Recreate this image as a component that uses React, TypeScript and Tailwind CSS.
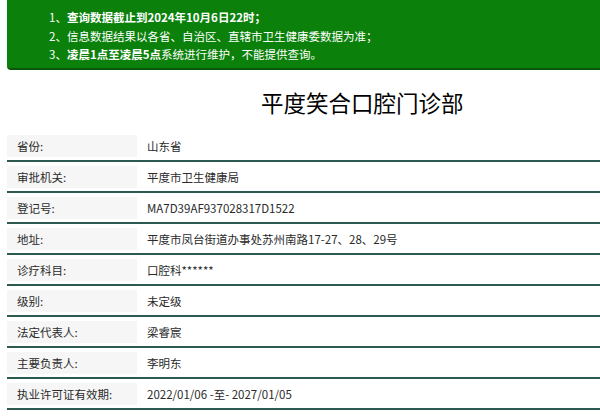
const rows: [string, string][] = [
  ["省份:", "山东省"],
  ["审批机关:", "平度市卫生健康局"],
  ["登记号:", "MA7D39AF937028317D1522"],
  ["地址:", "平度市凤台街道办事处苏州南路17-27、28、29号"],
  ["诊疗科目:", "口腔科******"],
  ["级别:", "未定级"],
  ["法定代表人:", "梁睿宸"],
  ["主要负责人:", "李明东"],
  ["执业许可证有效期:", "2022/01/06 -至- 2027/01/05"],
]

export default function App() {
  return (
    <div
      className="w-[600px] h-[417px] overflow-hidden bg-white text-[#2a2a2a]"
      style={{ fontFamily: '"Noto Sans CJK SC", "Noto Sans", sans-serif' }}
    >
      {/* 提示 */}
      <div className="ml-[7px] h-[70px] bg-[#0b810b] border-b-2 border-[#0a560a] rounded-bl-[4px] pl-[42px] pt-[8px] text-white text-[11.5px] leading-[18.5px]">
        <div>
          1、<span className="font-bold">查询数据截止到2024年10月6日22时；</span>
        </div>
        <div>2、信息数据结果以各省、自治区、直辖市卫生健康委数据为准；</div>
        <div>
          3、<span className="font-bold">凌晨1点至凌晨5点</span>系统进行维护，不能提供查询。
        </div>
      </div>

      <h1 className="pl-[261px] pt-[16px] h-[61px] text-[22.5px] leading-[32px] text-black">
        平度笑合口腔门诊部
      </h1>

      <div className="ml-[7px] flex flex-col">
        {rows.map(([k, v]) => (
          <div key={k} className="flex pt-[4px] pb-[3px] border-b-2 border-[#2c5a50] text-[11.5px] leading-[22px]">
            <div className="w-[130px] h-[22px] bg-[#f6f6f6] pl-[10px]">{k}</div>
            <div className="pl-[10px]">{v}</div>
          </div>
        ))}
      </div>
    </div>
  )
}
